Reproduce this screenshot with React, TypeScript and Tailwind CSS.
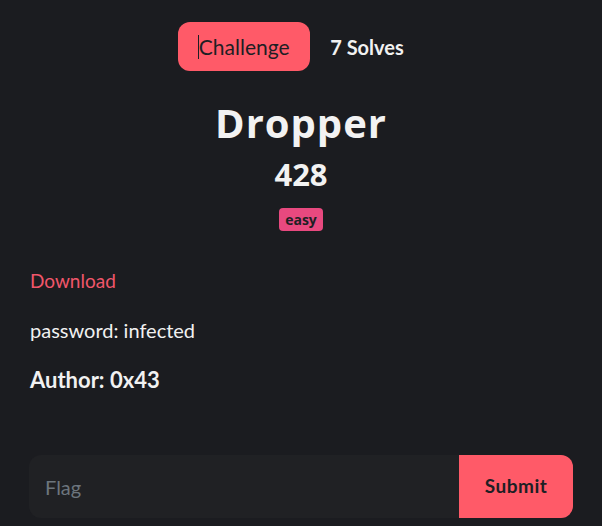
export default function App() {
  return (
    <div className="min-h-[526px] w-full bg-[#1b1c20] font-['Lato',sans-serif] text-[#f1f1f1]">
      <div className="flex items-center justify-center gap-5 pr-[20px] pt-[22px]">
        <button className="relative h-[49px] w-[132px] rounded-[12px] bg-[#ff5a68] text-[21px] text-[#1d1f24]">
          <span className="absolute left-[20px] top-[13px] h-[24px] w-px bg-[#1d1f24]" />
          Challenge
        </button>
        <button className="h-[49px] px-0 text-[20px] font-bold text-[#f1f1f1]">7 Solves</button>
      </div>

      <div className="mt-[24px] flex flex-col items-center">
        <h1 className="font-['Open_Sans',sans-serif] text-[40px] font-bold leading-[56px] tracking-[1px] text-[#f2f2f2]">
          Dropper
        </h1>
        <div className="mt-[5px] font-['Open_Sans',sans-serif] text-[31px] font-bold leading-[36px] text-[#f2f2f2]">
          428
        </div>
        <span className="mt-[16px] flex h-[23px] items-center rounded-[4px] bg-[#e8497f] px-[6px] font-['Open_Sans',sans-serif] text-[14px] font-bold text-[#1d1f24]">
          easy
        </span>
      </div>

      <div className="mt-[37px] px-[30px]">
        <a className="block text-[19px] leading-[26px] text-[#f0566a]">Download</a>
        <p className="mt-[24px] text-[20px] leading-[24px]">password: infected</p>
        <p className="mt-[25px] text-[22px] font-bold leading-[26px]">Author: 0x43</p>
      </div>

      <div className="mx-[29px] mt-[62px] flex h-[63px] overflow-hidden rounded-[12px] bg-[#202124]">
        <input
          placeholder="Flag"
          className="flex-1 bg-transparent px-[16px] text-[20px] text-white outline-none placeholder:text-[#6c757d]"
        />
        <button className="w-[114px] bg-[#ff5a68] text-[19px] font-bold tracking-[0.5px] text-[#1d1f24]">
          Submit
        </button>
      </div>
    </div>
  );
}
